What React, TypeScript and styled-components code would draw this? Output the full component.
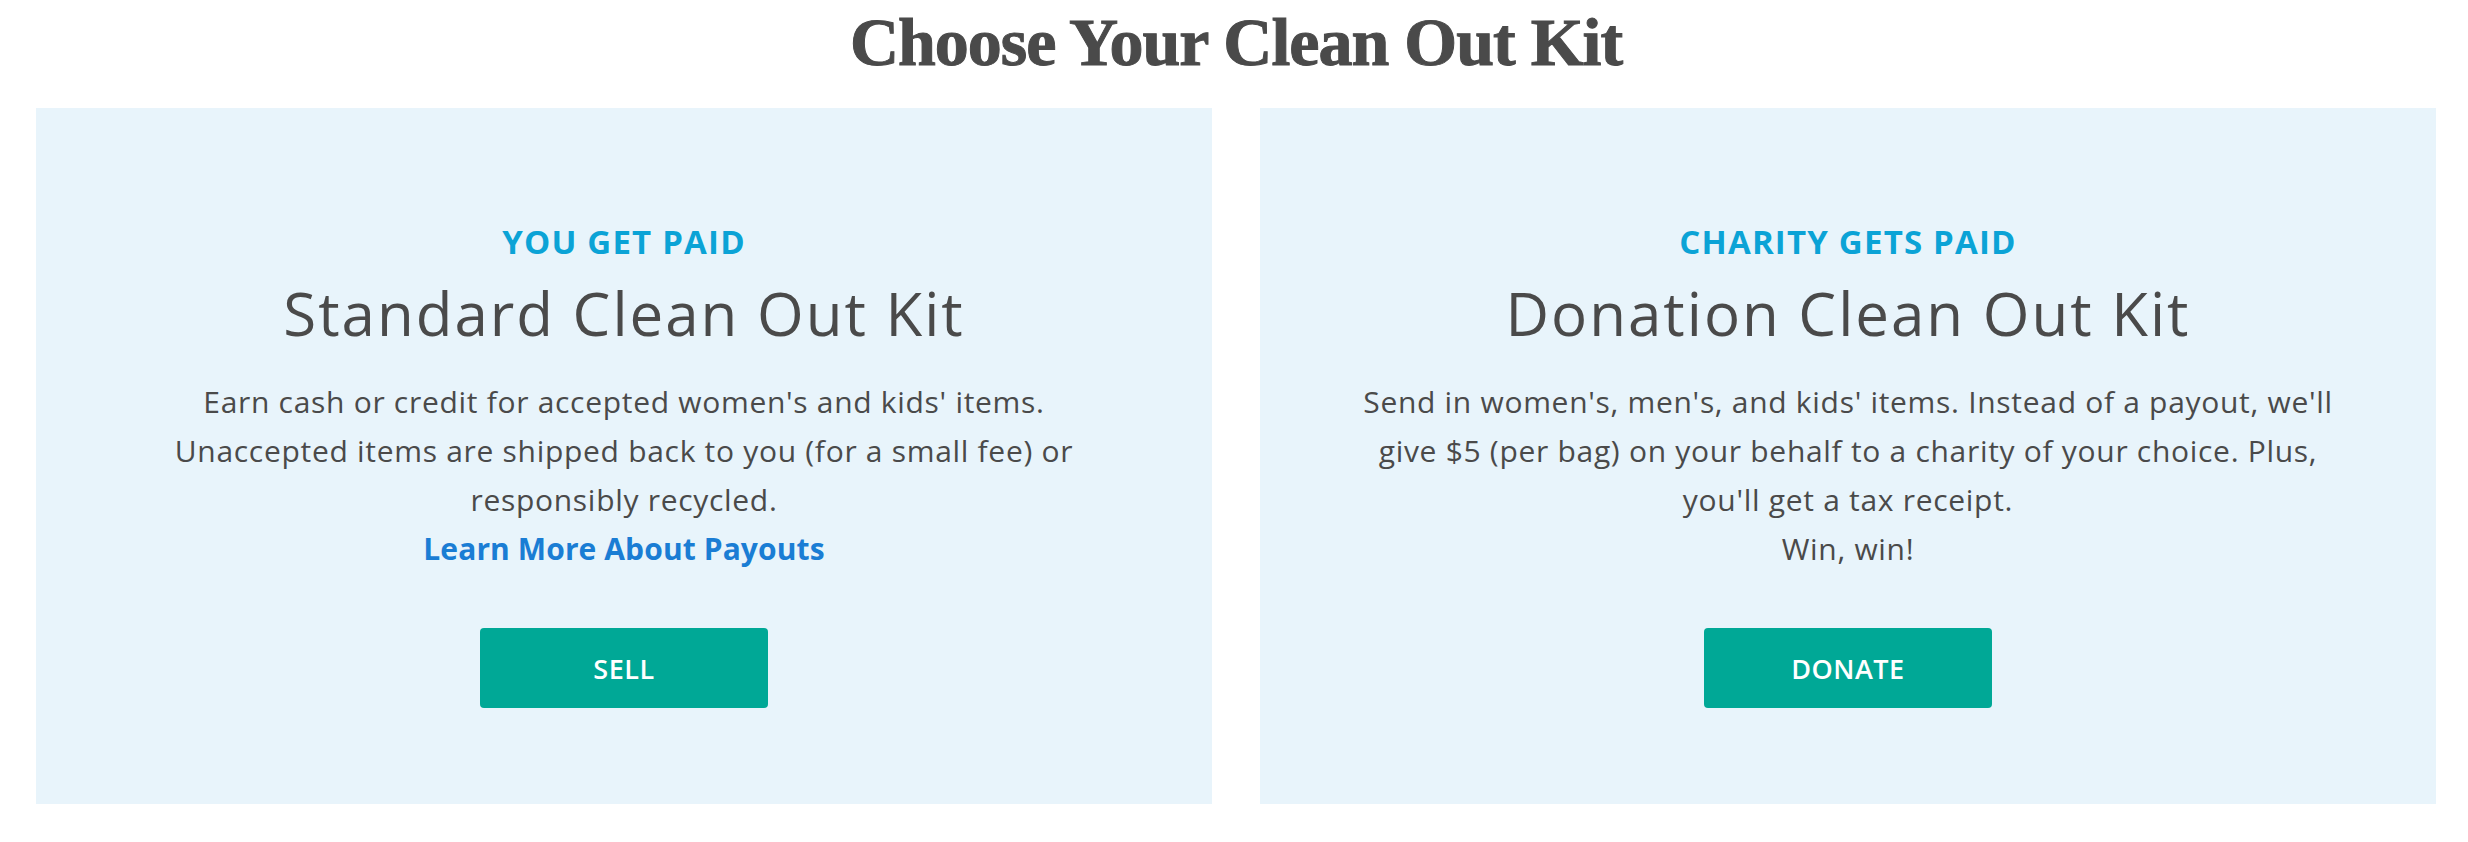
import styled, { createGlobalStyle } from "styled-components";

type KitProps = {
  tag: string;
  title: string;
  lines: string[];
  link?: string;
  action: string;
};

const kits: KitProps[] = [
  {
    tag: "YOU GET PAID",
    title: "Standard Clean Out Kit",
    lines: [
      "Earn cash or credit for accepted women's and kids' items.",
      "Unaccepted items are shipped back to you (for a small fee) or",
      "responsibly recycled.",
    ],
    link: "Learn More About Payouts",
    action: "SELL",
  },
  {
    tag: "CHARITY GETS PAID",
    title: "Donation Clean Out Kit",
    lines: [
      "Send in women's, men's, and kids' items. Instead of a payout, we'll",
      "give $5 (per bag) on your behalf to a charity of your choice. Plus,",
      "you'll get a tax receipt.",
      "Win, win!",
    ],
    action: "DONATE",
  },
];

const KitCard = ({ tag, title, lines, link, action }: KitProps) => (
  <Card>
    <Tag>{tag}</Tag>
    <KitTitle>{title}</KitTitle>
    <Copy>
      {lines.map((line) => (
        <Line key={line}>{line}</Line>
      ))}
      {link && <MoreLink href="#">{link}</MoreLink>}
    </Copy>
    <ActionButton type="button">{action}</ActionButton>
  </Card>
);

export default function App() {
  return (
    <>
      <GlobalStyle />
      <Page>
        <Heading>Choose Your Clean Out Kit</Heading>
        <Cards>
          {kits.map((kit) => (
            <KitCard key={kit.action} {...kit} />
          ))}
        </Cards>
      </Page>
    </>
  );
}

const GlobalStyle = createGlobalStyle`
  html, body {
    margin: 0;
    padding: 0;
    background: #ffffff;
  }
  body {
    font-family: "Open Sans", "Noto Sans", sans-serif;
    color: #4a4a4a;
  }
`;

const Page = styled.main`
  padding: 5px 32px 38px 36px;
`;

const Heading = styled.h1`
  margin: 0 0 28px;
  font-family: "Liberation Serif", "Times New Roman", serif;
  font-weight: 700;
  font-size: 68px;
  line-height: 75px;
  letter-spacing: -1px;
  text-align: center;
  color: #4a4a4a;
  -webkit-text-stroke: 1px #4a4a4a;
`;

const Cards = styled.div`
  display: grid;
  grid-template-columns: 1fr 1fr;
  gap: 48px;
`;

const Card = styled.section`
  display: flex;
  flex-direction: column;
  align-items: center;
  padding: 114px 40px 96px;
  background: #e8f4fb;
  text-align: center;
`;

const Tag = styled.div`
  font-size: 33px;
  line-height: 40px;
  font-weight: 700;
  letter-spacing: 1.2px;
  color: #0ba3d6;
`;

const KitTitle = styled.h2`
  margin: 15px 0 0;
  font-size: 60px;
  line-height: 72px;
  font-weight: 400;
  letter-spacing: 2px;
  color: #4a4a4a;
`;

const Copy = styled.div`
  margin-top: 28px;
  font-size: 30px;
  line-height: 49px;
  letter-spacing: 0.7px;
  color: #4a4a4a;
`;

const Line = styled.div`
  white-space: nowrap;
`;

const MoreLink = styled.a`
  display: block;
  font-weight: 700;
  letter-spacing: 0.1px;
  color: #1a7dd4;
  text-decoration: none;
`;

const ActionButton = styled.button`
  margin-top: 55px;
  width: 288px;
  height: 80px;
  border: none;
  border-radius: 4px;
  background: #00a896;
  color: #ffffff;
  font-family: "Open Sans", "Noto Sans", sans-serif;
  font-size: 27px;
  font-weight: 600;
  letter-spacing: 0.5px;
  cursor: pointer;
`;
